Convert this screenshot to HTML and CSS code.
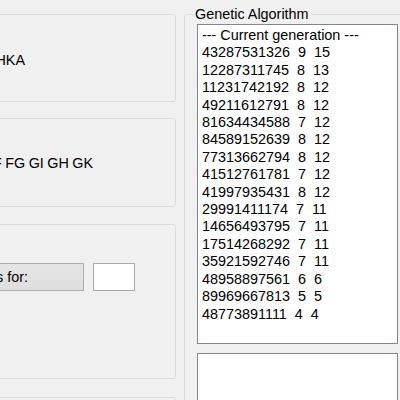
FILE: index.html
```html
<!DOCTYPE html>
<html>
<head>
<meta charset="utf-8">
<link rel="stylesheet" href="styles.css">
</head>
<body>
<div class="window">
  <div class="left">
    <div class="group g1"><div class="label l1">Best path: ABCDEFGIJHKA</div></div>
    <div class="group g2"><div class="label l2">Edges: AB BC CD DE EF FG GI GH GK</div></div>
    <div class="group g3">
      <div class="row">
        <button class="btn">Show solutions for:</button>
        <div class="textbox"></div>
      </div>
    </div>
    <div class="group g4"></div>
  </div>
  <fieldset class="ga">
    <legend>Genetic Algorithm</legend>
    <div class="listbox main">
      <div>--- Current generation ---</div>
      <div>43287531326&nbsp; 9&nbsp; 15</div>
      <div>12287311745&nbsp; 8&nbsp; 13</div>
      <div>11231742192&nbsp; 8&nbsp; 12</div>
      <div>49211612791&nbsp; 8&nbsp; 12</div>
      <div>81634434588&nbsp; 7&nbsp; 12</div>
      <div>84589152639&nbsp; 8&nbsp; 12</div>
      <div>77313662794&nbsp; 8&nbsp; 12</div>
      <div>41512761781&nbsp; 7&nbsp; 12</div>
      <div>41997935431&nbsp; 8&nbsp; 12</div>
      <div>29991411174&nbsp; 7&nbsp; 11</div>
      <div>14656493795&nbsp; 7&nbsp; 11</div>
      <div>17514268292&nbsp; 7&nbsp; 11</div>
      <div>35921592746&nbsp; 7&nbsp; 11</div>
      <div>48958897561&nbsp; 6&nbsp; 6</div>
      <div>89969667813&nbsp; 5&nbsp; 5</div>
      <div>48773891111&nbsp; 4&nbsp; 4</div>
    </div>
    <div class="listbox second"></div>
  </fieldset>
</div>
</body>
</html>
```
FILE: styles.css
```css
html, body {
  margin: 0;
  padding: 0;
  background: #f0f0f0;
  overflow: hidden;
  width: 400px;
  height: 400px;
}
body {
  font-family: "Liberation Sans", Arial, sans-serif;
  font-size: 14.4px;
  color: #000;
}
.window {
  display: flex;
  align-items: flex-start;
  width: 700px;
}
.left {
  flex: none;
  margin-left: -220px;
  width: 396px;
  padding-top: 14px;
  display: flex;
  flex-direction: column;
}
.group {
  box-sizing: border-box;
  border: 1px solid #dadada;
  border-radius: 3px;
}
.g1 { height: 88px; padding-top: 37px; }
.g2 { height: 89px; margin-top: 16px; padding-top: 36px; }
.g3 { height: 155px; margin-top: 17px; padding-top: 38px; }
.g4 { height: 100px; margin-top: 18px; }
.label {
  line-height: 17px;
  white-space: nowrap;
  text-align: right;
}
.l1 { padding-right: 150px; }
.l2 { padding-right: 82px; word-spacing: -0.6px; }
.row {
  display: flex;
  justify-content: flex-end;
  gap: 9px;
  padding-right: 40px;
}
.btn {
  box-sizing: border-box;
  height: 28px;
  padding: 0 55px;
  margin: 0;
  font: inherit;
  color: #000;
  background: linear-gradient(#e5e5e5, #dedede);
  border: 1px solid #adadad;
  border-radius: 0;
  white-space: nowrap;
}
.textbox {
  box-sizing: border-box;
  width: 42px;
  height: 28px;
  background: #fff;
  border: 1px solid #a9a9a9;
}
.ga {
  flex: none;
  box-sizing: border-box;
  margin: 6px 0 0 8px;
  width: 260px;
  height: 500px;
  padding: 1px 0 0 8px;
  border: 1px solid #dadada;
  border-radius: 3px;
  min-width: 0;
}
.ga legend {
  padding: 0 2px;
  line-height: 17px;
}
.listbox {
  box-sizing: border-box;
  margin-left: 4px;
  width: 201px;
  background: #fff;
  border: 1px solid #828790;
  white-space: nowrap;
}
.main {
  height: 320px;
  padding: 2px 0 0 4px;
  line-height: 17.4px;
}
.second {
  height: 60px;
  margin-top: 9px;
}
```
